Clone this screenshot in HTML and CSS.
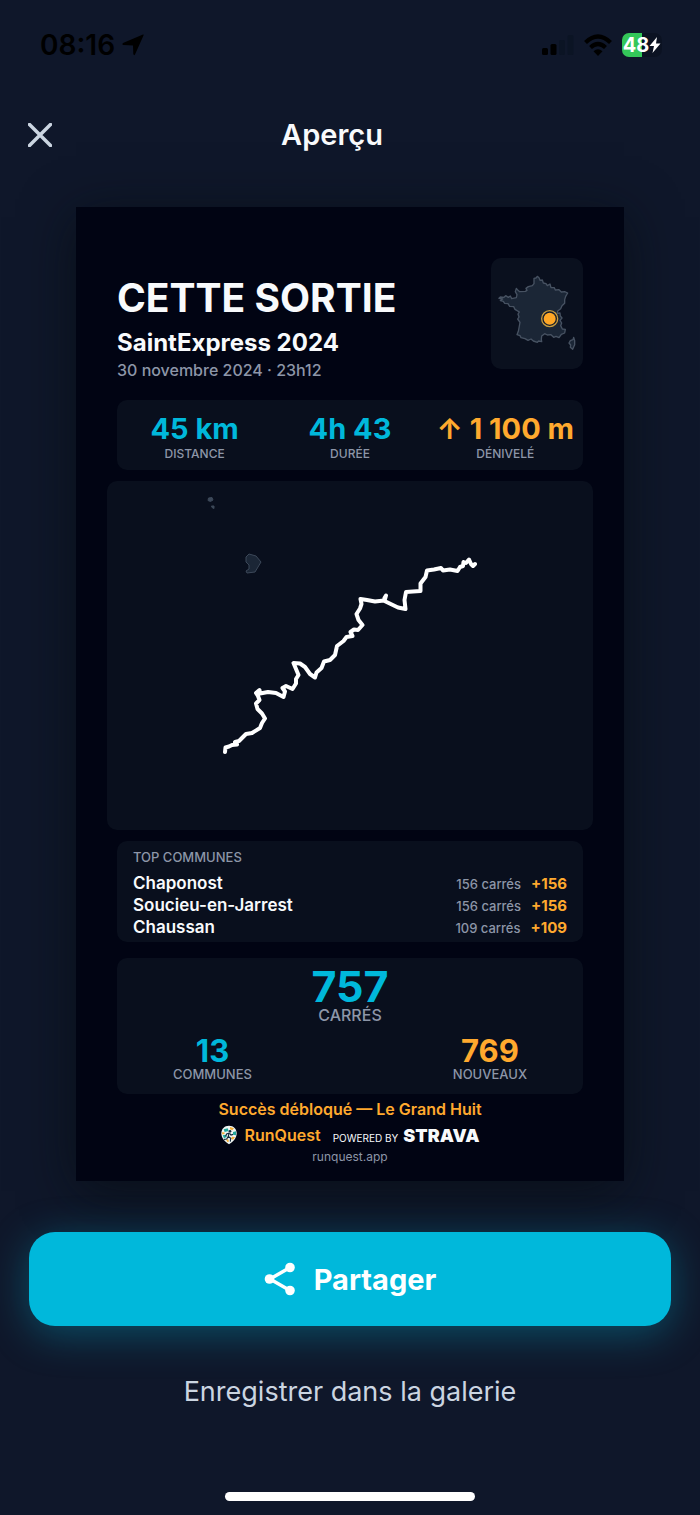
FILE: index.html
```html
<!DOCTYPE html>
<html lang="fr">
<head>
	<meta charset="utf-8">
	<meta name="viewport" content="width=device-width, initial-scale=1">
	<title>Aperçu</title>
	<link rel="stylesheet" href="styles.css">
</head>
<body>
	<div class="status">
		<div class="status-left">
			<span class="time">08:16</span>
			<svg width="24" height="24" viewBox="0 0 24 24"><path d="M22 1.500Q23 1 22.500 2.500L14 21.500Q13 23 12.300 21L12 12.500L2.500 12Q0.500 11.500 2 10Z" fill="#000"/></svg>
		</div>
		<div class="status-right">
			<svg width="32" height="20" viewBox="0 0 32 20">
				<rect x="0" y="13" width="6" height="7" rx="1.500" fill="#000"/>
				<rect x="8.500" y="9" width="6" height="11" rx="1.500" fill="#000"/>
				<rect x="17" y="5" width="6" height="15" rx="1.500" fill="#0b1424"/>
				<rect x="25.500" y="0" width="6" height="20" rx="1.500" fill="#0b1424"/>
			</svg>
			<svg width="30" height="22" viewBox="0 0 30 22">
				<g fill="none" stroke="#000" stroke-width="4.200">
					<path d="M2.500 8.500Q15 -3.500 27.500 8.500"/>
					<path d="M7.500 13.500Q15 6.500 22.500 13.500"/>
				</g>
				<path d="M10.500 17.300Q15 13.300 19.500 17.300L15 22Z" fill="#000"/>
			</svg>
			<div class="battery">
				<span>48</span>
				<svg width="12" height="16" viewBox="0 0 12 16"><path d="M8 0L0.500 9H5L3.500 16L11.500 6.500H7Z" fill="#fff"/></svg>
			</div>
		</div>
	</div>

	<header class="topbar">
		<button class="close" type="button" aria-label="Fermer">
			<svg width="24" height="24" viewBox="0 0 24 24"><path d="M1.500 1.500L22.500 22.500M22.500 1.500L1.500 22.500" stroke="#cbd5e1" stroke-width="3.500" stroke-linecap="round"/></svg>
		</button>
		<h1>Aperçu</h1>
	</header>

	<main>
		<article class="card">
			<div class="hero">
				<div class="hero-text">
					<h2>CETTE SORTIE</h2>
					<h3>SaintExpress 2024</h3>
					<p>30 novembre 2024 · 23h12</p>
				</div>
				<svg class="france" viewBox="36 54 276 333">
					<g fill="#1b2636" stroke="#475262" stroke-width="4" stroke-linejoin="round">
						<path d="M165 115L171 114L175 109L180 113L183 121L190 120L193 129L201 131L205 137L213 132L216 143L226 143L229 150L240 149L247 156L257 155L266 159L260 169L257 179L257 190L249 197L245 206L236 213L235 220L243 219L244 228L249 234L243 241L248 249L245 257L250 267L259 268L257 279L247 283L240 293L231 289L224 292L216 284L205 285L197 281L188 288L187 298L188 305L179 303L175 307L163 303L156 297L147 301L138 296L126 293L123 287L114 284L118 274L121 258L123 247L116 237L120 231L117 222L121 216L108 208L104 200L92 199L87 191L77 190L73 184L64 182L71 177L60 175L64 171L75 172L80 167L88 172L94 168L98 176L112 173L114 164L109 155L112 145L117 151L122 155L139 154L144 151L141 145L148 140L160 137L165 131Z"/>
						<path d="M284 292L287 302L287 314L281 328L274 322L275 315L270 309L274 302L282 299Z"/>
					</g>
					<circle cx="212" cy="236" r="24" fill="#141d2c" stroke="#c99c3e" stroke-width="4"/>
					<circle cx="212" cy="236" r="18" fill="#ffa726"/>
				</svg>
			</div>

			<dl class="panel stats">
				<div><dd>45 km</dd><dt>DISTANCE</dt></div>
				<div><dd>4h 43</dd><dt>DURÉE</dt></div>
				<div class="gold"><dd>↑ 1 100 m</dd><dt>DÉNIVELÉ</dt></div>
			</dl>

			<!-- tracé -->
			<svg class="panel map" viewBox="107 481 486 349">
				<g fill="#1b2636" stroke="#3c4859" stroke-width="1" stroke-linejoin="round">
					<path d="M249 554L256 556L261 562L255 572L247 573L246 571L249 569L249 565L246 562L246 557Z"/>
					<path fill="#3c4859" d="M208.500 498L212 497.500L213 500L210.500 501.500L208 500.500Z"/>
					<path fill="#3c4859" d="M211.500 506L214 506L214 508.500L212 507.500Z"/>
				</g>
				<path class="track" d="M225 752L225.500 747.500L229 746.500L232 745L237 744.500L235 742L239 741L242 738L246 734L252 733L260 728L262 723L265 718.500L262 713.500L257.500 709L256 703.500L259.500 700L258 696L256 693L259.500 690L260 693.500L268 692L276 693L283.500 697L285 691.500L282.500 688L286 686L292.500 689L296 683.500L296 679L298.500 675L296 669L293.500 663L300 663.500L305 667L310 674L315 677.500L316.500 672.500L321.500 668L324 661.500L330 660L335 655L337 646L343.500 641L346.500 637L352.500 636L350.500 632L354 629.500L358 630L362.500 625L358.500 620L356.500 614L360 608.500L361.500 604L360.500 599L367 600L375 601.500L384 600.500L384.500 598L386 595.500L384.500 601L398 607.500L405.500 609L404.500 600L406 592L413 591.500L420.500 591L420.500 583.500L425.500 577L427 570.500L434 569.500L441 568L443 570.500L450 569.500L457.500 571L460 567L463 566L463.500 562L466 563L469 559.500L471 564L473 566L475 564"/>
			</svg>

			<section class="panel communes">
				<h4>TOP COMMUNES</h4>
				<ul>
					<li><b>Chaponost</b><span>156 carrés</span><strong>+156</strong></li>
					<li><b>Soucieu-en-Jarrest</b><span>156 carrés</span><strong>+156</strong></li>
					<li><b>Chaussan</b><span>109 carrés</span><strong>+109</strong></li>
				</ul>
			</section>

			<dl class="panel totals">
				<div class="total-main"><dd>757</dd><dt>CARRÉS</dt></div>
				<div class="total-row">
					<div><dd>13</dd><dt>COMMUNES</dt></div>
					<div class="gold"><dd>769</dd><dt>NOUVEAUX</dt></div>
				</div>
			</dl>

			<footer class="credits">
				<p class="success">Succès débloqué — Le Grand Huit</p>
				<div class="brands">
					<svg width="16" height="20" viewBox="0 0 48 58">
						<path d="M24 1C38 1 47 11 47 24C47 39 36 50 24 57C12 50 1 39 1 24C1 11 10 1 24 1Z" fill="#eef5f3"/>
						<path d="M8 12L20 9L23 17L11 20ZM36 20L45 18L45 30L36 28ZM5 30L14 28L17 35L9 39Z" fill="#1fa79b"/>
						<path d="M27 5L39 9L34 15L27 12ZM4 20L12 22L9 27L3 27ZM33 34L42 35L36 43L30 40ZM15 43L21 41L24 48L20 51Z" fill="#f4ad35"/>
						<circle cx="27" cy="18" r="4" fill="#13283b"/>
						<path d="M25 23L17 26L14 33M24 23L22 33L29 39L28 49M22 33L17 41L9 42M26 24L30 29L36 27" fill="none" stroke="#13283b" stroke-width="3.500"/>
					</svg>
					<span class="runquest">RunQuest</span>
					<span class="powered">POWERED BY</span>
					<span class="strava">STRAVA</span>
				</div>
				<p class="site">runquest.app</p>
			</footer>
		</article>

		<div class="actions">
			<button class="share" type="button">
				<svg width="32" height="34" viewBox="0 0 32 34">
					<path d="M26 5.500L6 17L26 28.500" fill="none" stroke="#fff" stroke-width="3.500"/>
					<circle cx="26" cy="5.500" r="4.800" fill="#fff"/>
					<circle cx="5.500" cy="17" r="4.800" fill="#fff"/>
					<circle cx="26" cy="28.500" r="4.800" fill="#fff"/>
				</svg>
				Partager
			</button>
			<button class="save" type="button">Enregistrer dans la galerie</button>
		</div>
	</main>
	<div class="home-bar"></div>
</body>
</html>
```
FILE: styles.css
```css
*{
	box-sizing: border-box;
	margin: 0;
	padding: 0;
}
body{
	background: #0f172a;
	color: #f8fafc;
	font-family: Inter, "Liberation Sans", sans-serif;
}
svg{
	display: block;
	flex-shrink: 0;
}
ul{
	list-style: none;
}
button{
	border: none;
	background: none;
	color: inherit;
	font-family: inherit;
	cursor: pointer;
}
/* barre d'état */
.status{
	display: flex;
	justify-content: space-between;
	align-items: center;
	height: 90px;
	padding: 0 38px 0 40px;
}
.status-left{
	display: flex;
	align-items: center;
	gap: 6px;
}
.status-right{
	display: flex;
	align-items: center;
	gap: 9px;
}
.time{
	color: #000;
	font-size: 28px;
	font-weight: 600;
}
.battery{
	display: flex;
	align-items: center;
	justify-content: center;
	width: 40px;
	height: 24px;
	border-radius: 7px;
	background: linear-gradient(90deg, #34c759 50%, #0b1222 50%);
	color: #fff;
	font-size: 20px;
	font-weight: 700;
}
/* en-tête */
.topbar{
	display: flex;
	align-items: center;
	height: 90px;
	padding: 0 88px 0 28px;
}
.close{
	width: 24px;
	height: 24px;
}
.topbar h1{
	flex: 1;
	font-size: 29px;
	font-weight: 600;
	line-height: 34px;
	text-align: center;
}
/* carte */
.card{
	margin: 27px 76px 0;
	padding: 51px 31px 16px;
	background: #010413;
	box-shadow: 0 10px 50px rgba(6,12,16,.65);
}
.hero,
.stats,
.communes,
.totals{
	margin-left: 10px;
	margin-right: 10px;
}
.hero{
	display: flex;
	justify-content: space-between;
	align-items: flex-start;
}
.hero-text{
	padding-top: 16px;
}
.hero h2{
	font-size: 39px;
	font-weight: 700;
	line-height: 48px;
}
.hero h3{
	margin-top: 6px;
	font-size: 24px;
	font-weight: 700;
	line-height: 30px;
}
.hero p{
	color: #8d96a8;
	font-size: 16px;
	font-weight: 500;
	line-height: 24px;
}
.france{
	width: 92px;
	height: 111px;
	border-radius: 10px;
	background: #0a101e;
}
.panel{
	border-radius: 10px;
	background: #090f1d;
}
dl dd{
	color: #00b8db;
	font-weight: 700;
}
dl .gold dd{
	color: #ffa92e;
}
dl dt{
	color: #8d96a8;
	font-weight: 500;
}
.stats{
	display: grid;
	grid-template-columns: 1fr 1fr 1fr;
	margin-top: 18px;
	padding: 13px 0 7px;
	text-align: center;
}
.stats dd{
	font-size: 29px;
	line-height: 32px;
	white-space: nowrap;
}
.stats dt{
	font-size: 12px;
	line-height: 18px;
}
.map{
	width: 100%;
	margin: 11px 0;
}
.track{
	fill: none;
	stroke: #fff;
	stroke-width: 4px;
	stroke-linecap: round;
	stroke-linejoin: round;
}
.communes{
	padding: 7px 16px 4px;
}
.communes h4{
	margin-bottom: 6px;
	color: #8d96a8;
	font-size: 13px;
	font-weight: 500;
	line-height: 18px;
}
.communes li{
	display: flex;
	align-items: baseline;
	gap: 10px;
	height: 22px;
	line-height: 22px;
}
.communes b{
	flex: 1;
	font-size: 17px;
	font-weight: 600;
}
.communes span{
	color: #8d96a8;
	font-size: 13px;
	font-weight: 500;
}
.communes strong{
	color: #ffa92e;
	font-size: 15px;
	font-weight: 700;
}
.totals{
	margin-top: 16px;
	padding: 7px 56px 12px;
	text-align: center;
}
.total-main dd{
	font-size: 43px;
	line-height: 42px;
}
.total-main dt{
	font-size: 16px;
	line-height: 16px;
}
.total-row{
	display: flex;
	justify-content: space-between;
	margin-top: 13px;
}
.total-row dd{
	font-size: 31px;
	line-height: 30px;
}
.total-row dt{
	font-size: 13px;
	line-height: 16px;
}
.credits{
	padding-top: 3px;
	text-align: center;
}
.success{
	color: #ffa92e;
	font-size: 16px;
	font-weight: 600;
	line-height: 24px;
}
.brands{
	display: flex;
	justify-content: center;
	align-items: center;
	height: 28px;
}
.runquest{
	margin: 0 12px 0 8px;
	color: #ffa92e;
	font-size: 16px;
	font-weight: 600;
}
.powered{
	margin-right: 5px;
	padding-top: 6px;
	font-size: 10px;
}
.strava{
	font-size: 18px;
	font-weight: 900;
}
.site{
	color: #8d96a8;
	font-size: 12px;
	line-height: 16px;
}
/* boutons */
.actions{
	padding: 51px 29px 0;
	text-align: center;
}
.share{
	display: flex;
	justify-content: center;
	align-items: center;
	gap: 18px;
	width: 100%;
	height: 94px;
	border-radius: 26px;
	background: #00b8db;
	box-shadow: 0 8px 40px rgba(0,184,219,.35);
	color: #fff;
	font-size: 29px;
	font-weight: 700;
}
.save{
	margin-top: 42px;
	color: #cbd5e1;
	font-size: 27px;
	line-height: 48px;
}
.home-bar{
	width: 250px;
	height: 9px;
	margin: 76px auto 14px;
	border-radius: 5px;
	background: #fff;
}
```
